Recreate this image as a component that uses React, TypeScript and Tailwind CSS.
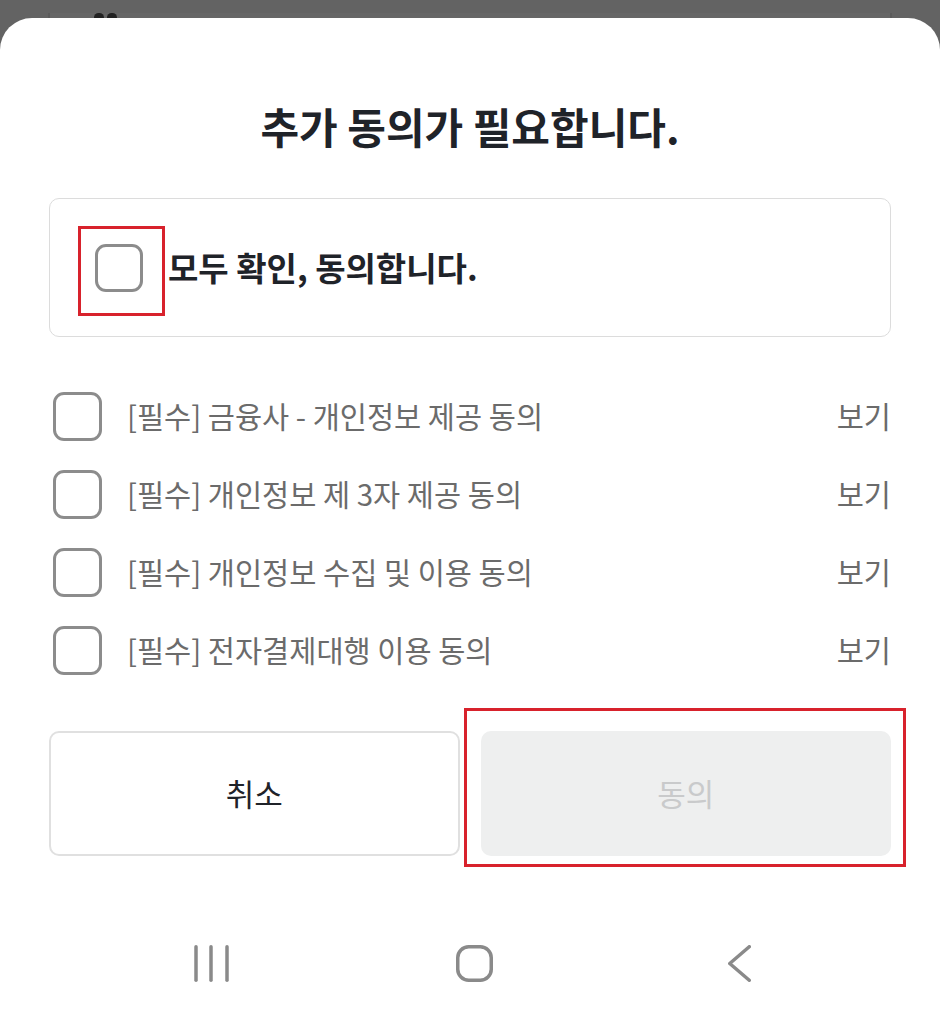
import React from "react";

const FONT = { fontFamily: '"Noto Sans CJK KR", "Noto Sans", sans-serif' };

function Box({ size = 48 }: { size?: number }) {
  return (
    <div
      className="shrink-0 rounded-[11px] border-[3px] border-[#8c8c8c] bg-white"
      style={{ width: size, height: size }}
    />
  );
}

const items = [
  "[필수] 금융사 - 개인정보 제공 동의",
  "[필수] 개인정보 제 3자 제공 동의",
  "[필수] 개인정보 수집 및 이용 동의",
  "[필수] 전자결제대행 이용 동의",
];

export default function App() {
  return (
    <div className="relative h-[1024px] w-[940px] overflow-hidden bg-[#636363]" style={FONT}>
      {/* background page peeking */}
      <div className="mx-[48px] h-[60px] border-x-2 border-[#5b5b5b] bg-[#666666]">
        <div className="ml-[44px] mt-[13px] flex gap-[3px]">
          <div className="h-[9px] w-[10px] rounded-full bg-[#222]" />
          <div className="h-[9px] w-[10px] rounded-full bg-[#222]" />
        </div>
      </div>

      {/* bottom sheet */}
      <div className="absolute inset-x-0 bottom-0 top-[18px] flex flex-col rounded-t-[32px] bg-white px-[49px] pt-[83px]">
        <h1 className="text-center text-[42px] font-bold leading-[50px] text-[#1f2329]">
          추가 동의가 필요합니다.
        </h1>

        <div className="mt-[47px] flex h-[139px] items-center rounded-[10px] border border-[#dcdcdc] pl-[45px]">
          <div className="relative">
            <Box size={48} />
            <div className="pointer-events-none absolute -left-[17px] -top-[18px] h-[90px] w-[87px] border-[3px] border-[#d8222c]" />
          </div>
          <span className="ml-[25px] text-[33px] font-bold leading-none text-[#1f2329]">
            모두 확인, 동의합니다.
          </span>
        </div>

        <div className="mt-[55px] flex flex-col gap-[30px] pl-[4px]">
          {items.map((t) => (
            <div key={t} className="flex h-[48px] items-center">
              <Box size={49} />
              <span className="ml-[25px] flex-1 text-[29.5px] leading-none text-[#6b6b6b]">
                {t}
              </span>
              <span className="text-[29.5px] leading-none text-[#6b6b6b]">보기</span>
            </div>
          ))}
        </div>

        <div className="mt-[57px] grid grid-cols-2 gap-[21px]">
          <button className="flex h-[125px] items-center justify-center rounded-[10px] border-2 border-[#e0e0e0] bg-white text-[31px] font-normal text-[#1f2329]">
            취소
          </button>
          <div className="relative">
            <button className="flex h-[125px] w-full items-center justify-center rounded-[10px] bg-[#eeefef] text-[31px] font-normal text-[#c9cacb]">
              동의
            </button>
            <div className="pointer-events-none absolute -left-[17px] -right-[15px] -top-[23px] -bottom-[11px] border-[3px] border-[#d8222c]" />
          </div>
        </div>

        {/* nav bar */}
        <div className="mt-[89px] flex h-[37px] items-start">
          <svg className="ml-[145px]" width="35" height="37" viewBox="0 0 35 37" fill="none" stroke="#8a8a8a" strokeWidth="3.5" strokeLinecap="round">
            <line x1="2" y1="1.75" x2="2" y2="35.25" />
            <line x1="17" y1="1.75" x2="17" y2="35.25" />
            <line x1="33" y1="1.75" x2="33" y2="35.25" />
          </svg>
          <svg className="ml-[227px]" width="37" height="37" viewBox="0 0 37 37" fill="none" stroke="#8a8a8a" strokeWidth="3.5">
            <rect x="1.75" y="1.75" width="33.5" height="33.5" rx="11" />
          </svg>
          <svg className="ml-[235px]" width="23" height="37" viewBox="0 0 23 37" fill="none" stroke="#8a8a8a" strokeWidth="3.5" strokeLinecap="round" strokeLinejoin="round">
            <polyline points="21.25,1.75 1.75,18.5 21.25,35.25" />
          </svg>
        </div>
      </div>
    </div>
  );
}
